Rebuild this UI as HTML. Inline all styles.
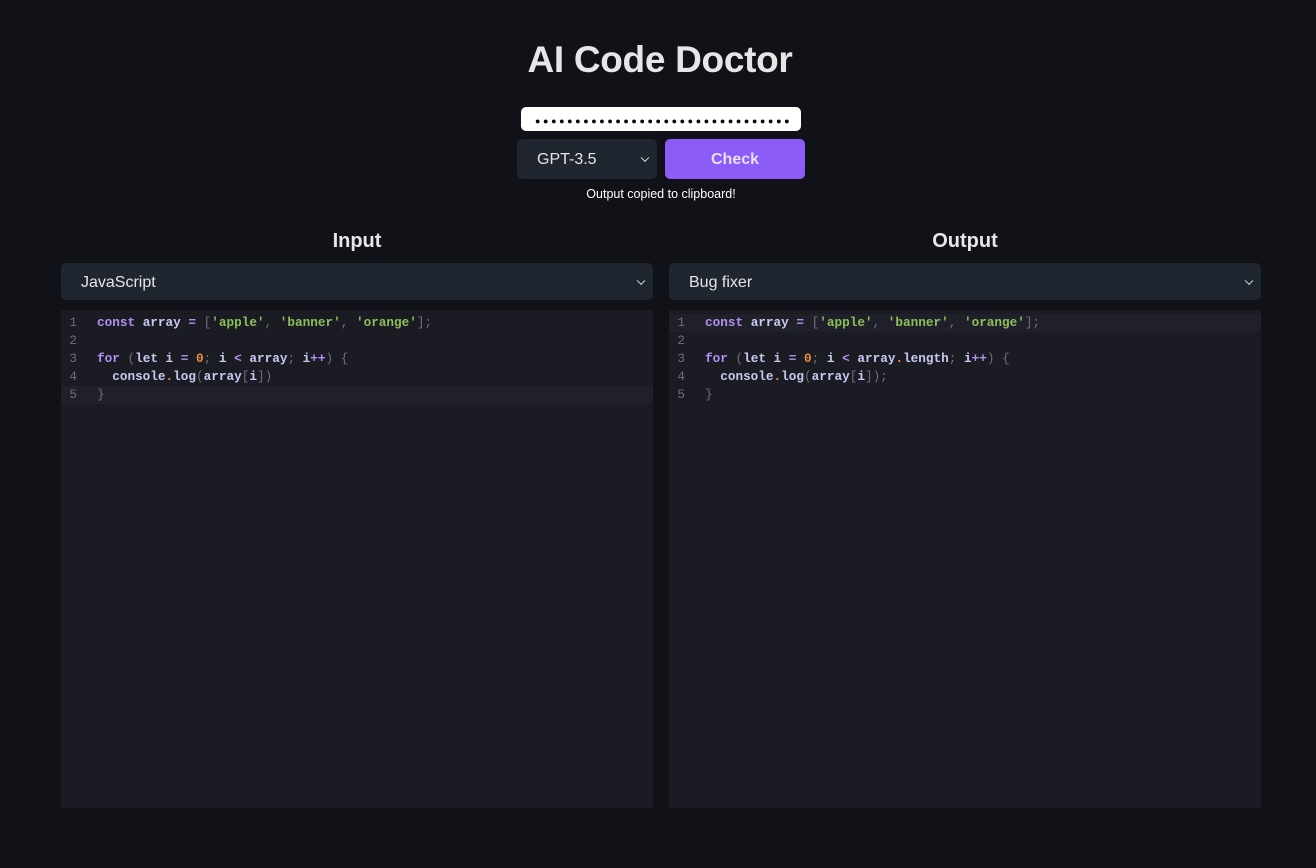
<!DOCTYPE html>
<html><head><meta charset="utf-8"><style>
body{margin:0;background:#111217;width:1316px;height:868px;font-family:"Liberation Sans",sans-serif;color:#e5e5e5;position:relative;overflow:hidden}
.abs{position:absolute}
h1{position:absolute;left:0;width:1316px;top:39px;margin:0;text-align:center;font-size:37px;font-weight:bold;color:#e6e6e6;letter-spacing:-0.3px;padding-left:4px;box-sizing:border-box}
.pw{left:521px;top:107px;width:280px;height:24px;background:#fff;border-radius:5px;color:#000;font-size:9px;line-height:28px;padding-left:14px;box-sizing:border-box;overflow:hidden;white-space:nowrap;letter-spacing:2.6px}
.sel{background:#1f2630;border-radius:5px;color:#e5e5e5;font-size:16px;box-sizing:border-box}
.chev{position:absolute;right:9px;top:50%;width:5px;height:5px;border-right:1.5px solid #ddd;border-bottom:1.5px solid #ddd;transform:translateY(-70%) rotate(45deg)}
.btn{left:665px;top:139px;width:140px;height:40px;background:#8b5cf6;border-radius:5px;color:#e8e0ff;font-weight:bold;font-size:16px;text-align:center;line-height:41px}
.msg{left:0;width:1316px;top:187px;text-align:center;font-size:12.5px;color:#fff;padding-left:6px;box-sizing:border-box}
.h2{font-size:20px;font-weight:bold;text-align:center;width:592px;top:230px;color:#e6e6e6}
.ed{top:310px;width:592px;height:498px;box-sizing:border-box;background:#1b1b23;font-family:"Liberation Mono",monospace;font-size:12.7px;font-weight:bold}
.ln{height:18px;line-height:18px;position:relative;white-space:pre;color:#c9c9f0}
.n{position:absolute;left:0;width:16px;text-align:right;color:#6e6e80;font-weight:normal}
.c{position:absolute;left:36px}
.k{color:#b48ff0}.s{color:#8cbf5a}.o{color:#f08a45}.p{color:#6e6e80;font-weight:normal}.op{color:#b48ff0}
</style></head><body>
<h1>AI Code Doctor</h1>
<div class="abs pw">●●●●●●●●●●●●●●●●●●●●●●●●●●●●●●●●</div>
<div class="abs sel" style="left:517px;top:139px;width:140px;height:40px;line-height:41px;padding-left:20px">GPT-3.5<span class="chev"></span></div>
<div class="abs btn">Check</div>
<div class="abs msg">Output copied to clipboard!</div>
<div class="abs h2" style="left:61px">Input</div>
<div class="abs h2" style="left:669px">Output</div>
<div class="abs sel" style="left:61px;top:263px;width:592px;height:37px;line-height:39px;padding-left:20px">JavaScript<span class="chev"></span></div>
<div class="abs sel" style="left:669px;top:263px;width:592px;height:37px;line-height:39px;padding-left:20px">Bug fixer<span class="chev"></span></div>
<div class="abs ed" style="left:61px;padding-top:4px">
<div class="ln"><span class="n">1</span><span class="c"><span class="k">const</span> array <span class="op">=</span> <span class="p">[</span><span class="s">'apple'</span><span class="p">,</span> <span class="s">'banner'</span><span class="p">,</span> <span class="s">'orange'</span><span class="p">];</span></span></div>
<div class="ln"><span class="n">2</span></div>
<div class="ln"><span class="n">3</span><span class="c"><span class="k">for</span> <span class="p">(</span>let i <span class="op">=</span> <span class="o">0</span><span class="p">;</span> i <span class="op">&lt;</span> array<span class="p">;</span> i<span class="op">++</span><span class="p">) {</span></span></div>
<div class="ln"><span class="n">4</span><span class="c">  console<span class="o">.</span>log<span class="p">(</span>array<span class="p">[</span>i<span class="p">])</span></span></div>
<div class="ln" style="background:#20202a"><span class="n">5</span><span class="c"><span class="p">}</span></span></div>
</div>
<div class="abs ed" style="left:669px;padding-top:4px">
<div class="ln" style="background:#20202a"><span class="n">1</span><span class="c"><span class="k">const</span> array <span class="op">=</span> <span class="p">[</span><span class="s">'apple'</span><span class="p">,</span> <span class="s">'banner'</span><span class="p">,</span> <span class="s">'orange'</span><span class="p">];</span></span></div>
<div class="ln"><span class="n">2</span></div>
<div class="ln"><span class="n">3</span><span class="c"><span class="k">for</span> <span class="p">(</span>let i <span class="op">=</span> <span class="o">0</span><span class="p">;</span> i <span class="op">&lt;</span> array<span class="o">.</span>length<span class="p">;</span> i<span class="op">++</span><span class="p">) {</span></span></div>
<div class="ln"><span class="n">4</span><span class="c">  console<span class="o">.</span>log<span class="p">(</span>array<span class="p">[</span>i<span class="p">]);</span></span></div>
<div class="ln"><span class="n">5</span><span class="c"><span class="p">}</span></span></div>
</div>
</body></html>
